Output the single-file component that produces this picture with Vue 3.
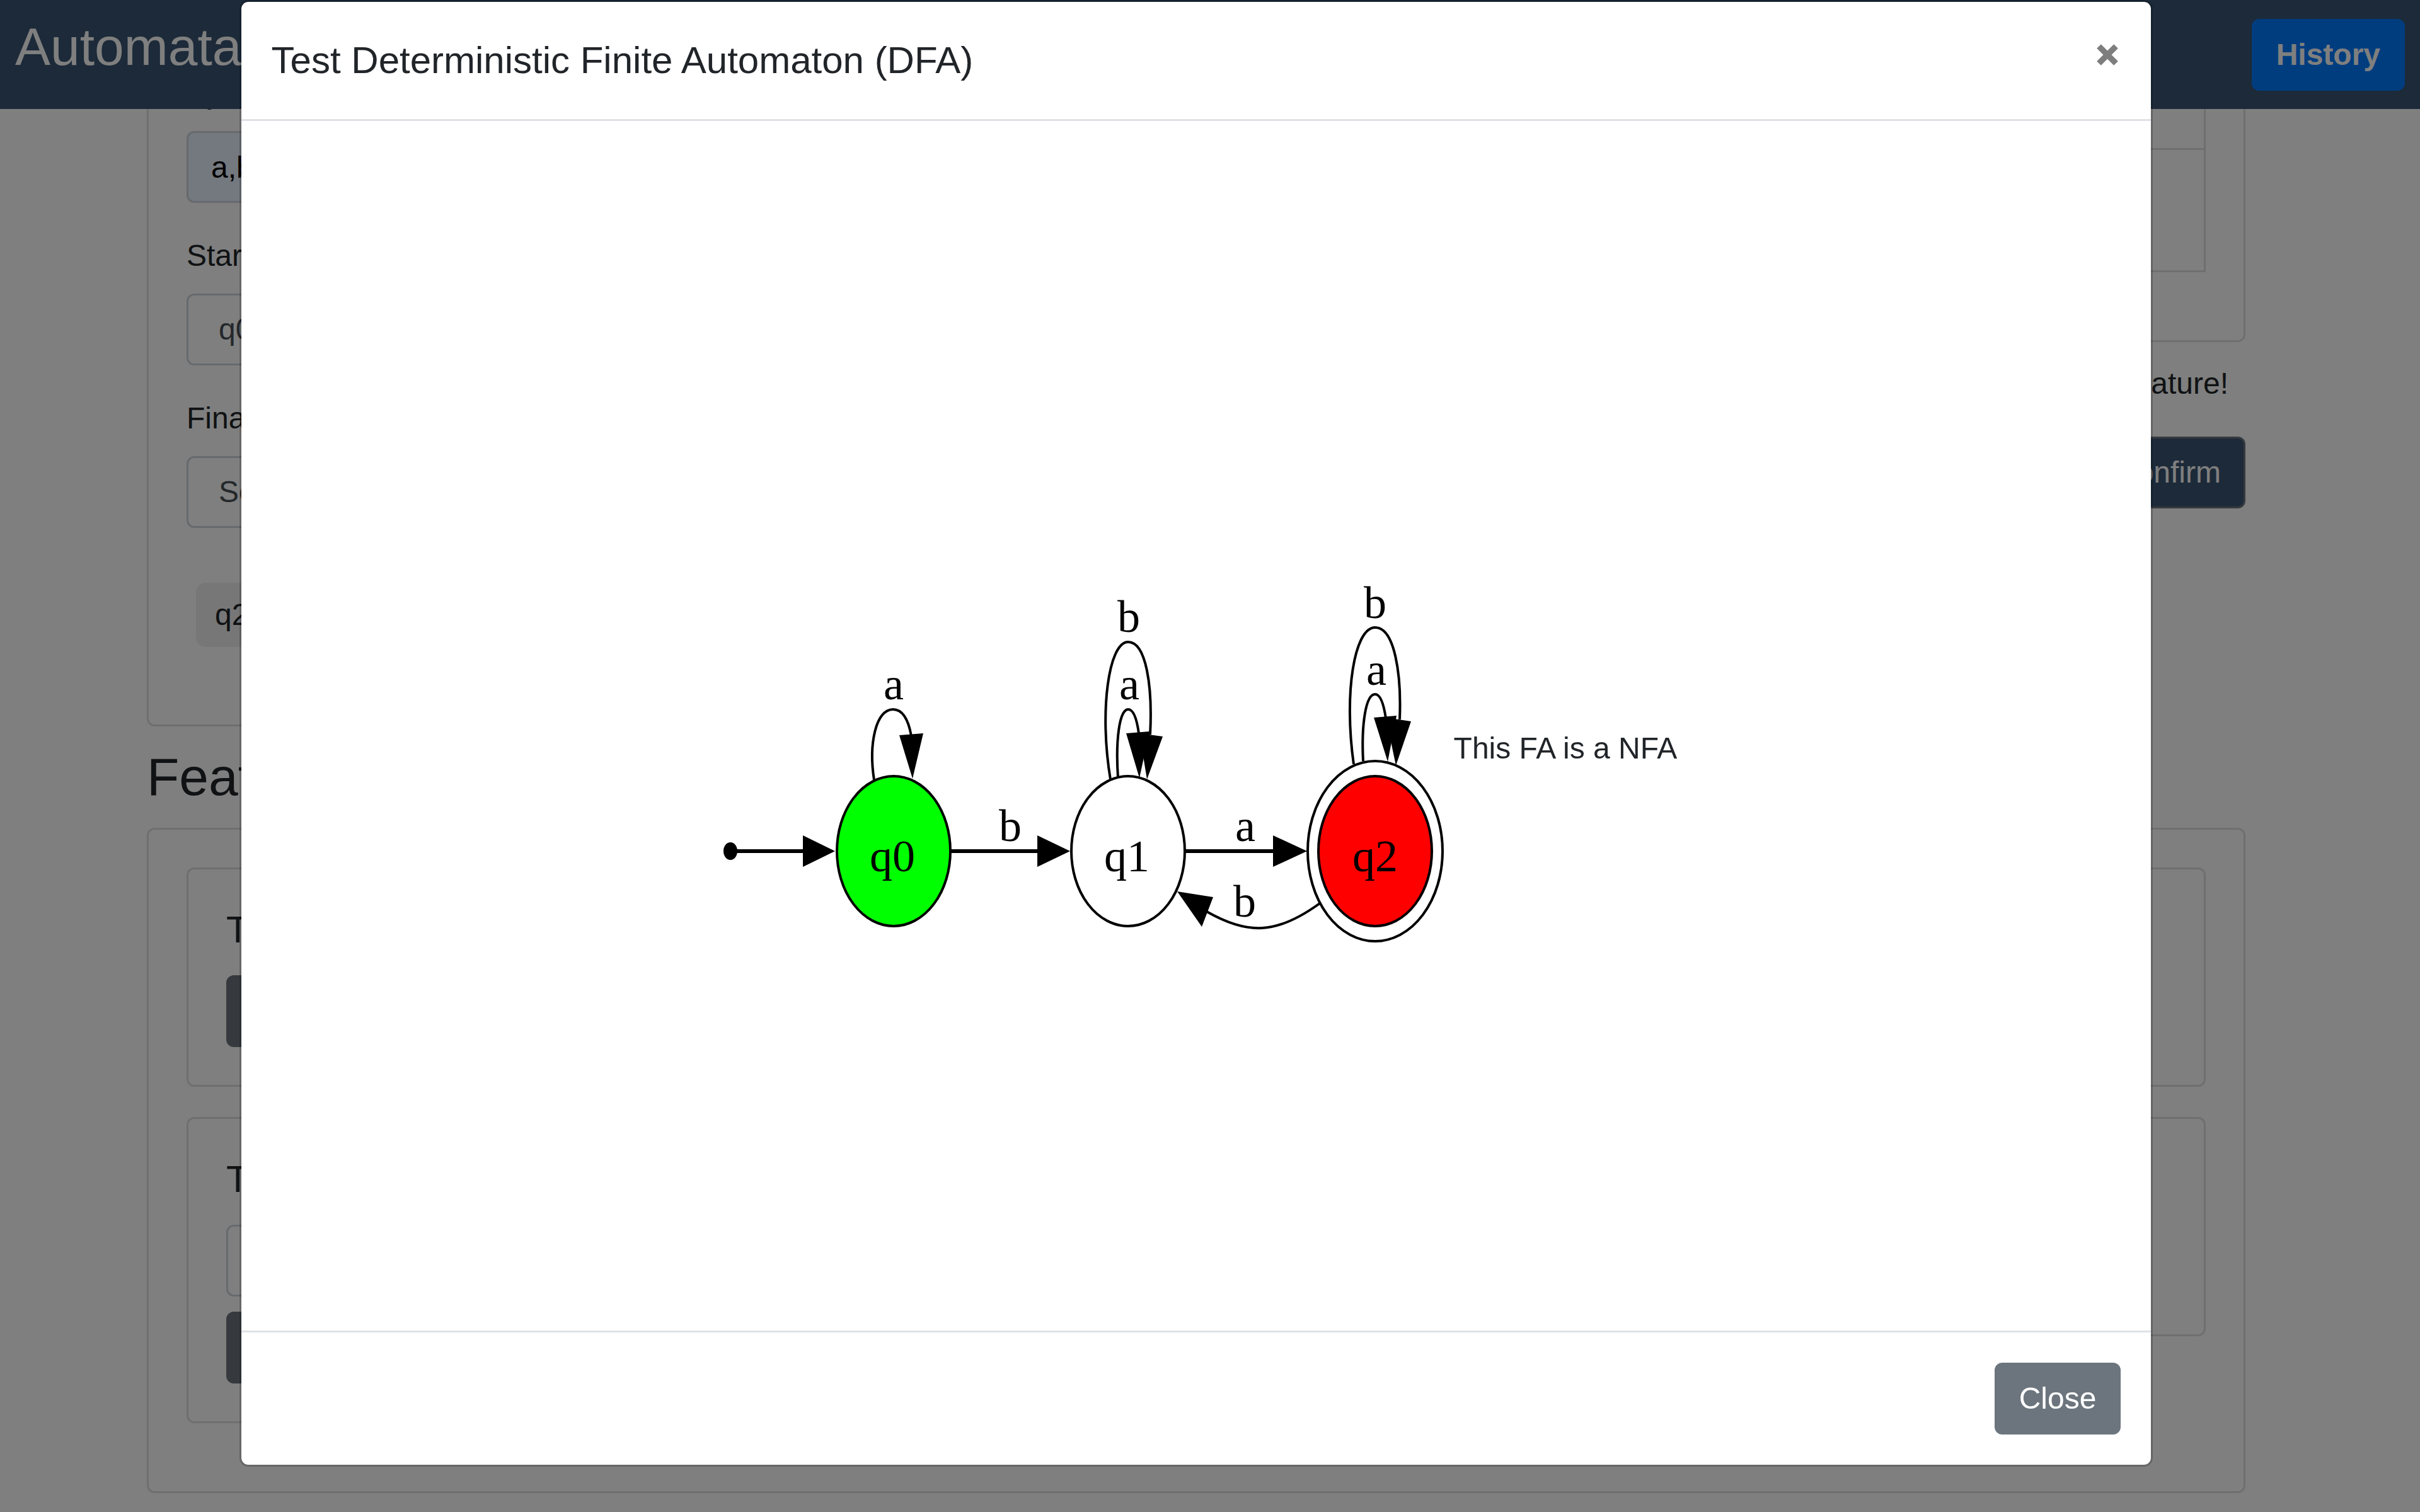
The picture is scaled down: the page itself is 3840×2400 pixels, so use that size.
<script setup>
import { ref } from 'vue'

const symbols = ref('a,b')
const startState = ref('q0')
const finalState = ref('Select')
const word = ref('')
const open = ref(true)

const straightEdges = ['M1168 1351H1276', 'M1508 1351H1648', 'M1881 1351H2022']

const curvedEdges = [
  'M1387 1238C1378 1180 1390 1126 1417 1126C1434 1126 1442 1146 1446 1168',
  'M1762 1237C1744 1130 1759 1019 1790 1019C1819 1019 1829 1090 1825 1166',
  'M1774 1234C1770 1176 1776 1126 1790 1126C1799 1126 1804 1142 1807 1164',
  'M2148 1213C2132 1100 2149 996 2182 996C2213 996 2224 1070 2221 1142',
  'M2163 1208C2160 1150 2167 1102 2182 1102C2191 1102 2196 1120 2199 1140',
  'M2094 1434C2025 1484 1980 1484 1913 1446',
]

const arrows = [
  '1274,1326 1274,1376 1325,1351',
  '1646,1326 1646,1376 1698,1351',
  '2020,1326 2020,1376 2074,1351',
  '1427,1167 1465,1164 1448,1236',
  '1787,1164 1824,1161 1808,1235',
  '1808,1164 1845,1169 1820,1237',
  '2180,1139 2216,1136 2202,1209',
  '2199,1139 2239,1145 2215,1215',
  '1925,1424 1907,1471 1868,1415',
]

const labels = [
  { t: 'q0', x: 1416, y: 1383 },
  { t: 'q1', x: 1788, y: 1383 },
  { t: 'q2', x: 2182, y: 1383 },
  { t: 'a', x: 1418, y: 1110 },
  { t: 'b', x: 1603, y: 1335 },
  { t: 'b', x: 1791, y: 1003 },
  { t: 'a', x: 1792, y: 1110 },
  { t: 'a', x: 1976, y: 1335 },
  { t: 'b', x: 1975, y: 1455 },
  { t: 'b', x: 2182, y: 981 },
  { t: 'a', x: 2184, y: 1087 },
]
</script>

<template>
  <div class="page">
    <nav class="navbar">
      <h3 class="brand">Automata</h3>
      <button type="button" class="btn primary">History</button>
    </nav>

    <main class="content">
      <div class="container">
        <div class="row">
          <form class="card col" @submit.prevent>
            <div class="group">
              <label for="symbols">Symbols</label>
              <input id="symbols" v-model="symbols" class="control filled" type="text" />
            </div>
            <div class="group">
              <label for="start">Start State</label>
              <select id="start" v-model="startState" class="control">
                <option>q0</option>
                <option>q1</option>
                <option>q2</option>
              </select>
            </div>
            <div class="group">
              <label for="final">Final States</label>
              <select id="final" v-model="finalState" class="control">
                <option>Select</option>
                <option>q0</option>
                <option>q1</option>
              </select>
            </div>
            <div class="chips"><span class="chip">q2</span></div>
          </form>

          <section class="col">
            <div class="card">
              <table class="table">
                <tbody>
                  <tr class="short"><td></td></tr>
                  <tr class="tall"><td></td></tr>
                </tbody>
              </table>
            </div>
            <p class="hint">feature!</p>
            <div class="actions">
              <button type="button" class="btn confirm">Confirm</button>
            </div>
          </section>
        </div>

        <h3 class="heading">Features</h3>

        <div class="card features">
          <section class="card item">
            <h5>Test</h5>
            <button type="button" class="btn secondary">Test</button>
          </section>
          <section class="card item"></section>
          <section class="card item">
            <h5><label for="word">Test</label></h5>
            <input id="word" v-model="word" class="control" type="text" />
            <button type="button" class="btn secondary">Test</button>
          </section>
          <section class="card item"></section>
        </div>
      </div>
    </main>

    <div v-if="open" class="overlay">
      <div class="modal" role="dialog" aria-modal="true" aria-labelledby="modal-title">
        <header class="modal-header">
          <h5 id="modal-title">Test Deterministic Finite Automaton (DFA)</h5>
          <button type="button" class="close" aria-label="Close" @click="open = false">
            <svg viewBox="0 0 42 42" aria-hidden="true">
              <path d="M7.5 7.5l27 27M34.5 7.5l-27 27" stroke="#000" stroke-width="9.5" />
            </svg>
          </button>
        </header>
        <figure class="modal-body">
          <svg class="graph" viewBox="1135 878 1160 620" aria-hidden="true">
            <ellipse cx="1159" cy="1351" rx="11" ry="14" />
            <g class="lines">
              <ellipse cx="1418" cy="1351" rx="90" ry="119" fill="#00ff00" />
              <ellipse cx="1790" cy="1351" rx="90" ry="119" />
              <ellipse cx="2182" cy="1351" rx="107" ry="143" />
              <ellipse cx="2182" cy="1351" rx="90" ry="119" fill="#ff0000" />
              <path v-for="d in curvedEdges" :key="d" :d="d" />
              <path v-for="d in straightEdges" :key="d" :d="d" stroke-width="6" />
            </g>
            <polygon v-for="p in arrows" :key="p" :points="p" />
            <text v-for="l in labels" :key="l.x + '-' + l.y" :x="l.x" :y="l.y">{{ l.t }}</text>
          </svg>
          <figcaption>This FA is a NFA</figcaption>
        </figure>
        <footer class="modal-footer">
          <button type="button" class="btn secondary" @click="open = false">Close</button>
        </footer>
      </div>
    </div>
  </div>
</template>

<style>
body {
  background: #fff;
}
</style>

<style scoped>
* {
  box-sizing: border-box;
}
.page {
  min-height: 100vh;
  font: 48px/72px "Liberation Sans", Arial, sans-serif;
  color: #212529;
}
h3,
h5,
p,
figure {
  margin: 0;
  font-weight: 400;
}
button,
input,
select {
  font: inherit;
}

.navbar {
  position: relative;
  z-index: 1;
  display: flex;
  align-items: center;
  justify-content: space-between;
  padding: 24px;
  background: #395573;
}
.brand,
.heading {
  font-size: 84px;
  line-height: 101px;
}
.brand {
  margin-bottom: 24px;
  color: #fff;
}

.btn {
  height: 114px;
  padding: 0 36px;
  border: 3px solid transparent;
  border-radius: 12px;
  color: #fff;
}
.primary {
  background: #007bff;
  border-color: #007bff;
  font-weight: 700;
}
.secondary {
  background: #6c757d;
  border-color: #6c757d;
}
.confirm {
  background: #395573;
  border-color: #6c757d;
}

.content,
.overlay {
  padding-right: 44px;
}
.container {
  max-width: 3420px;
  padding: 0 45px;
  margin: 0 auto;
}
.row {
  display: flex;
  gap: 90px;
  margin-top: -124px;
}
.col {
  flex: 1;
}
.card {
  padding: 60px;
  border: 3px solid #dfdfdf;
  border-radius: 12px;
}
.group {
  display: flex;
  flex-direction: column;
  gap: 24px;
  margin-bottom: 48px;
}
.control {
  width: 100%;
  height: 114px;
  padding: 0 36px;
  border: 3px solid #ced4da;
  border-radius: 12px;
  background: #fff;
  color: #495057;
}
select.control {
  padding: 0 48px;
  appearance: none;
}
.filled {
  background: #e8f0fe;
  color: #000;
}
.chips {
  display: flex;
  padding: 39px 15px 63px;
}
.chip {
  padding: 15px 30px;
  border-radius: 15px;
  background: #eee;
}
.table {
  width: 100%;
  margin-bottom: 48px;
  border-collapse: collapse;
}
.table td {
  padding: 0;
  border: 3px solid #dfdfdf;
}
.short {
  height: 123px;
}
.tall {
  height: 194px;
}
.hint {
  margin: 30px 27px 48px 0;
  text-align: right;
}
.actions {
  display: flex;
  justify-content: flex-end;
}
.heading {
  margin: 30px 0;
}
.features {
  display: grid;
  grid-template-columns: 1fr 1fr;
  align-items: start;
  gap: 48px 90px;
  padding-bottom: 108px;
  margin-bottom: 30px;
}
.item {
  display: flex;
  flex-direction: column;
  align-items: flex-start;
  gap: 24px;
  min-height: 348px;
}
.item h5 {
  margin-bottom: 12px;
  font-size: 60px;
  line-height: 72px;
}

.overlay {
  position: fixed;
  inset: 0;
  z-index: 2;
  background: rgba(0, 0, 0, 0.5);
}
.modal {
  width: 80%;
  margin: 0 auto;
  border: 3px solid rgba(0, 0, 0, 0.2);
  border-radius: 14px;
  background: #fff;
  background-clip: padding-box;
}
.modal-header {
  display: flex;
  align-items: flex-start;
  justify-content: space-between;
  padding: 48px;
  border-bottom: 3px solid #dee2e6;
}
.modal-header h5 {
  font-size: 60px;
  line-height: 90px;
}
.close {
  display: flex;
  align-items: center;
  height: 72px;
  padding: 0;
  border: 0;
  background: none;
  opacity: 0.5;
}
.close svg {
  width: 42px;
  height: 42px;
}
.modal-body {
  display: flex;
  align-items: center;
  justify-content: center;
  gap: 12px;
  min-height: 80vh;
  padding: 119px 48px 48px;
}
.graph {
  flex: 0 1 1160px;
  min-width: 0;
}
.lines {
  fill: none;
  stroke: #000;
  stroke-width: 4;
}
.graph text {
  font: 72px "Liberation Serif", "Times New Roman", serif;
  text-anchor: middle;
}
.modal-footer {
  display: flex;
  justify-content: flex-end;
  padding: 48px;
  border-top: 3px solid #dee2e6;
}
</style>
